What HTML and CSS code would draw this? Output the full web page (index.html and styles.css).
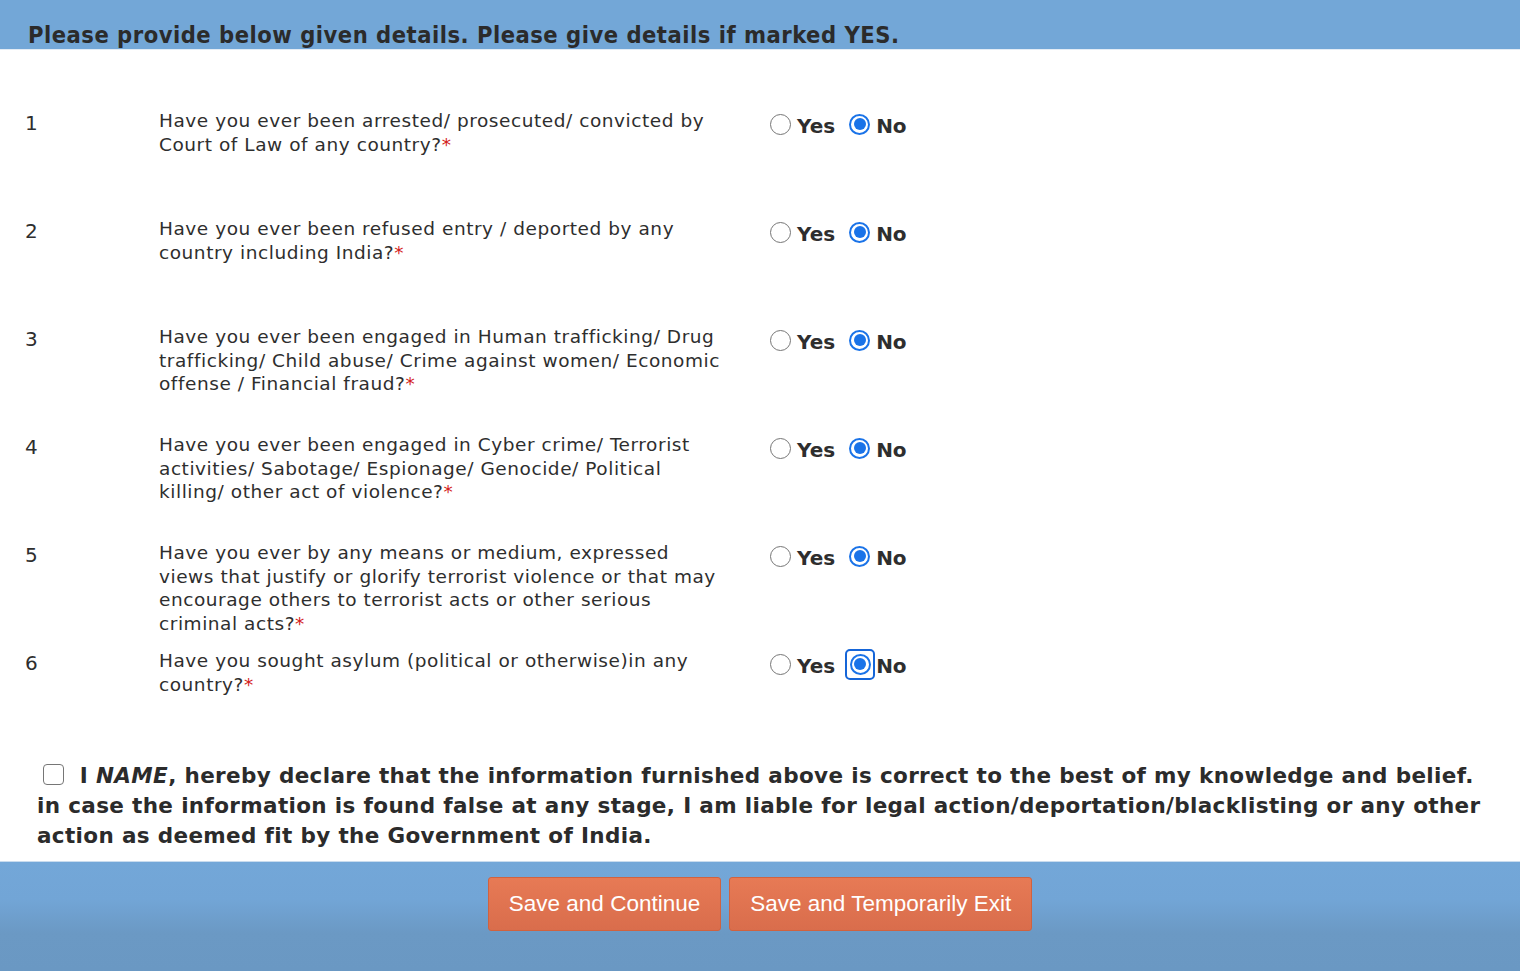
FILE: index.html
```html
<!DOCTYPE html>
<html lang="en">
<head>
  <meta charset="UTF-8" />
  <title>Details</title>
  <link rel="stylesheet" href="styles.css">
</head>
<body>
  <div class="page">
    <header class="top-bar">Please provide below given details. Please give details if marked YES.</header>

    <div class="questions">
      <div class="row">
        <div class="num">1</div>
        <div class="text">Have you ever been arrested/ prosecuted/ convicted by Court of Law of any country?<span class="req">*</span></div>
        <div class="choice">
          <label><input type="radio" name="q1"> Yes</label>
          <label><input type="radio" name="q1" checked> No</label>
        </div>
      </div>
      <div class="row">
        <div class="num">2</div>
        <div class="text">Have you ever been refused entry / deported by any country including India?<span class="req">*</span></div>
        <div class="choice">
          <label><input type="radio" name="q2"> Yes</label>
          <label><input type="radio" name="q2" checked> No</label>
        </div>
      </div>
      <div class="row">
        <div class="num">3</div>
        <div class="text">Have you ever been engaged in Human trafficking/ Drug trafficking/ Child abuse/ Crime against women/ Economic offense / Financial fraud?<span class="req">*</span></div>
        <div class="choice">
          <label><input type="radio" name="q3"> Yes</label>
          <label><input type="radio" name="q3" checked> No</label>
        </div>
      </div>
      <div class="row">
        <div class="num">4</div>
        <div class="text">Have you ever been engaged in Cyber crime/ Terrorist activities/ Sabotage/ Espionage/ Genocide/ Political killing/ other act of violence?<span class="req">*</span></div>
        <div class="choice">
          <label><input type="radio" name="q4"> Yes</label>
          <label><input type="radio" name="q4" checked> No</label>
        </div>
      </div>
      <div class="row">
        <div class="num">5</div>
        <div class="text">Have you ever by any means or medium, expressed views that justify or glorify terrorist violence or that may encourage others to terrorist acts or other serious criminal acts?<span class="req">*</span></div>
        <div class="choice">
          <label><input type="radio" name="q5"> Yes</label>
          <label><input type="radio" name="q5" checked> No</label>
        </div>
      </div>
      <div class="row">
        <div class="num">6</div>
        <div class="text">Have you sought asylum (political or otherwise)in any country?<span class="req">*</span></div>
        <div class="choice">
          <label><input type="radio" name="q6"> Yes</label>
          <label><span class="focus-ring"><input type="radio" name="q6" checked></span>No</label>
        </div>
      </div>
    </div>

    <div class="declare">
      <input type="checkbox" class="agree">
      I <em>NAME</em>, hereby declare that the information furnished above is correct to the best of my knowledge and belief. in case the information is found false at any stage, I am liable for legal action/deportation/blacklisting or any other action as deemed fit by the Government of India.
    </div>

    <div class="footer">
      <button>Save and Continue</button>
      <button>Save and Temporarily Exit</button>
    </div>
  </div>
</body>
</html>
```

FILE: styles.css
```css
* {
  box-sizing: border-box;
}

html, body {
  margin: 0;
  padding: 0;
  background: #ffffff;
  font-family: 'DejaVu Sans', Verdana, sans-serif;
  color: #2e2e2e;
}

.page {
  width: 1520px;
  height: 971px;
  display: flex;
  flex-direction: column;
}

.top-bar {
  background-color: #73a7d7;
  height: 50px;
  padding: 20px 0 0 28px;
  font-family: 'DejaVu Sans Condensed', 'DejaVu Sans', sans-serif;
  font-weight: bold;
  font-size: 23.5px;
  letter-spacing: 0.5px;
  line-height: 30px;
  color: #2b2b2b;
  border-bottom: 1px solid #e3ecf5;
  white-space: nowrap;
  overflow: hidden;
}

.questions {
  padding: 58px 0 0 25px;
}

.row {
  display: grid;
  grid-template-columns: 134px 566px auto;
  min-height: 108px;
}

.num {
  font-size: 20px;
  line-height: 26px;
  padding-top: 2px;
}

.text {
  font-size: 18.5px;
  letter-spacing: 0.55px;
  line-height: 23.5px;
  padding-top: 1px;
}

.req {
  color: #d42020;
}

.choice {
  padding-left: 45px;
  display: flex;
  gap: 14px;
  font-weight: bold;
  font-size: 20px;
  line-height: 26px;
  padding-top: 4px;
}

.choice label {
  display: flex;
  align-items: center;
  height: 28px;
}

.choice input {
  appearance: none;
  -webkit-appearance: none;
  width: 21px;
  height: 21px;
  margin: 0 6px 0 0;
  border: 1.5px solid #767676;
  border-radius: 50%;
  background: #fff;
  position: relative;
  top: -2px;
}

.choice input:checked {
  border: 2px solid #1a73e8;
}

.choice input:checked::after {
  content: "";
  position: absolute;
  left: 2.5px;
  top: 2.5px;
  width: 12px;
  height: 12px;
  border-radius: 50%;
  background: #1a73e8;
}

.focus-ring {
  display: flex;
  align-items: center;
  justify-content: center;
  width: 30px;
  height: 31px;
  margin: -4px 1px 0 -4px;
  border: 2.5px solid #1565d8;
  border-radius: 5px;
}

.focus-ring input {
  margin: 0;
  top: 0;
}

.declare {
  padding: 5px 28px 10px 37px;
  font-weight: bold;
  font-size: 21.5px;
  letter-spacing: 0.35px;
  line-height: 30px;
  color: #2b2b2b;
}

.agree {
  appearance: none;
  -webkit-appearance: none;
  width: 21px;
  height: 21px;
  margin: 0 8px 0 6px;
  border: 1.5px solid #767676;
  border-radius: 4px;
  background: #fff;
  vertical-align: -2px;
}

.footer {
  flex: 1;
  background: linear-gradient(180deg, #73a7d8 0%, #72a5d6 35%, #6b99c4 65%, #6a98c3 100%);
  border-top: 1px solid #c9dcee;
  display: flex;
  justify-content: center;
  align-items: flex-start;
  gap: 8px;
  padding-top: 15px;
}

.footer button {
  height: 54px;
  padding: 0 20px;
  font-family: 'Liberation Sans', Arial, sans-serif;
  font-size: 22.5px;
  color: #ffffff;
  background: linear-gradient(180deg, #e77a55, #d96d4c);
  border: 1px solid #d0623f;
  border-radius: 3px;
  cursor: pointer;
}
```
